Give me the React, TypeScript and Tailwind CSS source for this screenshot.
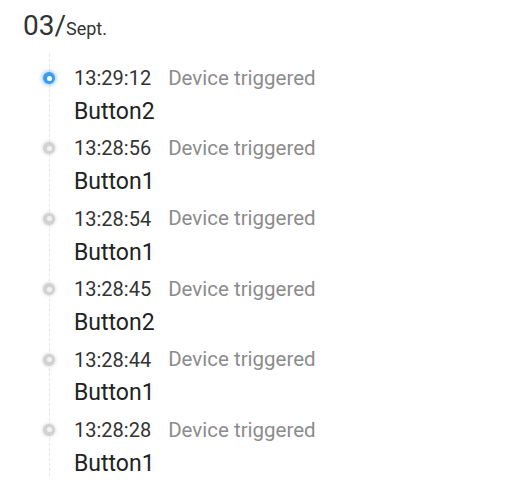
import * as React from "react";

const events = [
  { time: "13:29:12", label: "Button2", active: true },
  { time: "13:28:56", label: "Button1", active: false },
  { time: "13:28:54", label: "Button1", active: false },
  { time: "13:28:45", label: "Button2", active: false },
  { time: "13:28:44", label: "Button1", active: false },
  { time: "13:28:28", label: "Button1", active: false },
];

function Dot({ active }: { active: boolean }) {
  if (active) {
    return (
      <span className="flex h-[12px] w-[12px] items-center justify-center rounded-full bg-[#3d9bf2] shadow-[0_0_4px_1px_rgba(61,155,242,0.55)]">
        <span className="h-[5px] w-[5px] rounded-full bg-white" />
      </span>
    );
  }
  return (
    <span className="flex h-[12px] w-[12px] items-center justify-center rounded-full bg-[#d2d2d2] shadow-[0_0_3px_1px_rgba(200,200,200,0.5)]">
      <span className="h-[5px] w-[5px] rounded-full bg-[#f2f2f2]" />
    </span>
  );
}

export default function App() {
  return (
    <div
      className="h-[500px] w-[513px] bg-white pl-[23px] pt-[10px] text-[#222]"
      style={{ fontFamily: "Roboto, 'Liberation Sans', sans-serif" }}
    >
      <div className="flex items-baseline leading-[32px]">
        <span className="text-[28px] text-[#333]">03/</span>
        <span className="text-[18px] text-[#333]">Sept.</span>
      </div>

      <div className="relative mt-[17px] pl-[20px]">
        {/* vertical dashed line */}
        <div className="absolute left-[26px] top-[-8px] h-[422px] border-l border-dashed border-[#e6e6e6]" />
        {events.map((e, i) => (
          <div key={i} className="relative flex h-[70.4px] flex-col">
            <div className="flex h-[32px] items-center">
              <div className="flex w-[31px] items-center">
                <Dot active={e.active} />
              </div>
              <span className="text-[20px] text-[#333]">{e.time}</span>
              <span className="ml-[17px] text-[20.5px] text-[#8c8c8c]">Device triggered</span>
            </div>
            <div className="mt-[2px] flex h-[32px] items-center pl-[31px]">
              <span className="text-[23px] text-[#222]">{e.label}</span>
            </div>
          </div>
        ))}
      </div>
    </div>
  );
}
